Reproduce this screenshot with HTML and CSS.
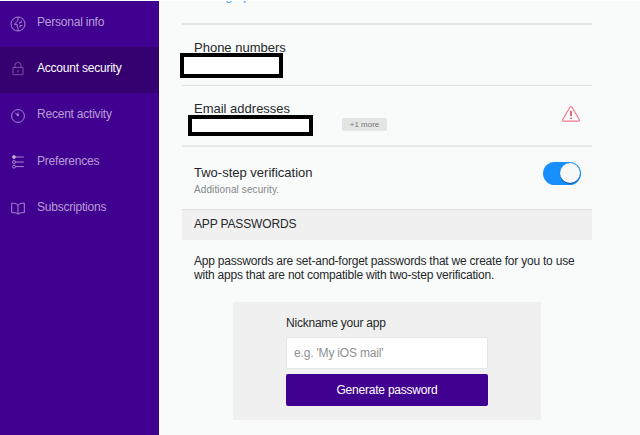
FILE: index.html
```html
<!DOCTYPE html>
<html lang="en">
<head>
<meta charset="utf-8">
<title>Account security</title>
<link rel="stylesheet" href="styles.css">
</head>
<body>
<div class="app">
  <nav class="sidebar">
    <a class="nav-item"><svg class="icon" viewBox="0 0 16 16"><circle cx="8" cy="8" r="7"/><path d="M8 1.5v3L4.2 8.3h3v2.2L8 12v3M11.3 4.5v2H9.6v1.2M12.5 9.5H10v2"/></svg><span>Personal info</span></a>
    <a class="nav-item active"><svg class="icon" viewBox="0 0 16 16"><path d="M3 6.5h10v7.2H3zM5 6.5V4.4a3 3 0 0 1 6 0v2.1M8 9v2.4"/></svg><span>Account security</span></a>
    <a class="nav-item"><svg class="icon" viewBox="0 0 16 16"><circle cx="8" cy="8" r="6.4"/><path d="M5.3 4.8 8 7.7V4.5"/><circle class="solid" cx="7.8" cy="7.2" r=".6"/></svg><span>Recent activity</span></a>
    <a class="nav-item"><svg class="icon" viewBox="0 0 16 16"><circle class="solid" cx="4" cy="3" r="1.6"/><circle cx="4" cy="8" r="1.5"/><circle cx="4" cy="12.6" r="1.5"/><path d="M5.5 3h8.3M5.5 8h8.3M5.5 12.6h8.3"/></svg><span>Preferences</span></a>
    <a class="nav-item"><svg class="icon" viewBox="0 0 16 16"><path d="M1.7 3.1c2.4 0 4.8.4 6.3 2 1.5-1.6 3.9-2 6.3-2v9.5c-2.4 0-4.8.1-6.3 1.7-1.5-1.6-3.9-1.7-6.3-1.7zM8 5.1v9"/></svg><span>Subscriptions</span></a>
  </nav>
  <main class="content">
    <section class="row row-password"><a class="link">Change password</a></section>
    <section class="row row-phone"><h2>Phone numbers</h2><div class="mask mask-phone"></div></section>
    <section class="row row-email">
      <h2>Email addresses</h2><div class="mask mask-email"></div>
      <span class="more">+1 more</span>
      <svg class="warning" viewBox="0 0 20 18"><path d="M9 2.2Q10 .9 11 2.2l7.4 12.6q.5 1.3-.8 1.3H2.4q-1.3 0-.8-1.3z"/><path class="mark" d="M10 5.8v5.2M10 12.5V14"/></svg>
    </section>
    <section class="row row-twostep">
      <div><h2>Two-step verification</h2><p class="note">Additional security.</p></div>
      <span class="toggle"><span class="knob"></span></span>
    </section>
    <h3 class="band">APP PASSWORDS</h3>
    <p class="description">App passwords are set-and-forget passwords that we create for you to use<br>with apps that are not compatible with two-step verification.</p>
    <form class="panel">
      <label for="nickname">Nickname your app</label>
      <input id="nickname" type="text" placeholder="e.g. 'My iOS mail'">
      <button type="button">Generate password</button>
    </form>
  </main>
</div>
</body>
</html>
```
FILE: styles.css
```css
* { box-sizing: border-box; }
body, h2, h3, p { margin: 0; font-weight: 400; }
body { background: #f9fbfb; font-family: "Liberation Sans", Arial, sans-serif; color: #26282a; }
.app { display: flex; height: 435px; overflow: hidden; border-top: 1px solid #fff; }
.sidebar { width: 159px; background: #400090; box-shadow: 1px 0 #fff; }
.nav-item { display: flex; align-items: center; height: 46.2px; padding: 0 0 4px 10px; gap: 11px; font-size: 12px; letter-spacing: -.22px; color: #b79fd5; }
.nav-item.active { background: #350070; color: #fff; }
.icon { width: 16px; height: 16px; margin-top: 3px; fill: none; stroke: #a487cc; stroke-width: 1; }
.nav-item.active .icon { margin-top: 1px; stroke: #7850a0; }
.icon .solid { fill: #cbb9e1; }
.content { width: 410px; margin-left: 23px; }
.row { position: relative; padding-left: 12px; border-bottom: 1px solid #dfe1e1; }
.row h2 { font-size: 13px; line-height: 16px; }
.row-password { display: flow-root; height: 24px; border-bottom: 2px solid #e4e6e6; }
.link { display: block; margin-top: -13px; font-size: 13px; line-height: 15px; color: #4a9bf5; }
.row-phone { height: 61px; padding-top: 15px; }
.row-email { display: flex; height: 61px; padding-top: 15px; border-bottom: 2px solid #e6e8e8; }
.mask { position: absolute; border: 4px solid #000; background: #fff; }
.mask-phone { left: -2px; top: 28px; width: 103px; height: 25px; }
.mask-email { left: 6px; top: 29px; width: 125px; height: 21px; }
.row-email h2 { width: 148px; }
.more { width: 45px; height: 13px; margin-top: 17px; border-radius: 2px; background: #e3e4e4; color: #777; font-size: 8px; line-height: 13px; text-align: center; }
.warning { width: 20px; height: 18px; margin: 4px 11px 0 auto; fill: none; stroke: #ee7c91; stroke-width: 1.2; }
.warning .mark { stroke: #d5213d; stroke-width: 1.3; }
.row-twostep { display: flex; justify-content: space-between; height: 63px; padding: 18px 11px 0 12px; }
.note { margin-top: 2px; font-size: 10px; line-height: 13px; letter-spacing: .1px; color: #858789; }
.toggle { width: 38px; height: 23px; margin-top: -3px; padding: 1px; border-radius: 12px; background: #188fff; }
.knob { display: block; width: 20px; height: 20px; margin-left: auto; border-radius: 50%; background: #f8f8f8; box-shadow: 0 1px 1px #075aa8; }
.band { height: 30px; padding-left: 12px; background: #f0f0f0; font-size: 12px; line-height: 29px; letter-spacing: -.15px; }
.description { margin: 14px 0 0 12px; font-size: 12px; line-height: 14px; letter-spacing: -.22px; white-space: nowrap; }
.panel { display: flex; flex-direction: column; width: 308px; height: 118px; margin: 20px 0 0 51px; padding: 14px 53px; background: #f0f0f0; }
.panel label { font-size: 12px; line-height: 15px; letter-spacing: -.22px; }
.panel input { flex: none; height: 32px; margin-top: 6px; padding: 0 7px; border: 1px solid #e5e5e5; border-radius: 1px; background: #fff; font: 12px "Liberation Sans", sans-serif; letter-spacing: -.18px; }
.panel input::placeholder { color: #8e9092; }
.panel button { flex: none; height: 32px; margin-top: 5px; padding: 0; border: 0; border-radius: 2px; background: #400090; color: #fff; font: 12px "Liberation Sans", sans-serif; letter-spacing: -.22px; }
```
